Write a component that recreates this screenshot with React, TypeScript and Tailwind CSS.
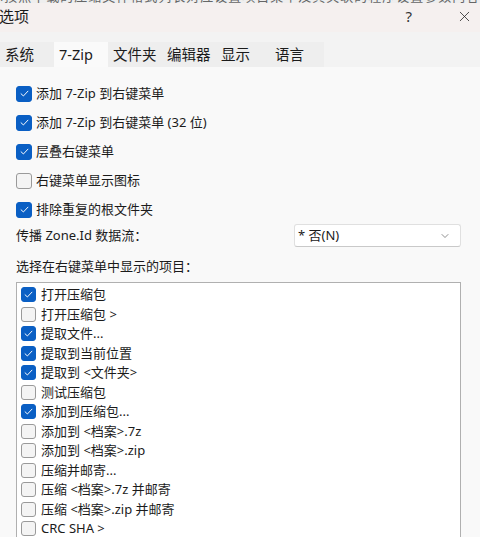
import { X, ChevronDown } from 'lucide-react'

const FONT = "font-['Segoe_UI','Noto_Sans','Noto_Sans_CJK_SC',sans-serif]"

const OPTIONS = [
  { label: '添加 7-Zip 到右键菜单', on: true },
  { label: '添加 7-Zip 到右键菜单 (32 位)', on: true },
  { label: '层叠右键菜单', on: true },
  { label: '右键菜单显示图标', on: false },
  { label: '排除重复的根文件夹', on: true },
]

const ITEMS = [
  { label: '打开压缩包', on: true },
  { label: '打开压缩包 >', on: false },
  { label: '提取文件...', on: true },
  { label: '提取到当前位置', on: true },
  { label: '提取到 <文件夹>', on: true },
  { label: '测试压缩包', on: false },
  { label: '添加到压缩包...', on: true },
  { label: '添加到 <档案>.7z', on: false },
  { label: '添加到 <档案>.zip', on: false },
  { label: '压缩并邮寄...', on: false },
  { label: '压缩 <档案>.7z 并邮寄', on: false },
  { label: '压缩 <档案>.zip 并邮寄', on: false },
  { label: 'CRC SHA >', on: false },
]

const TABS = ['系统', '7-Zip', '文件夹', '编辑器', '显示', '语言']

function Check({ on, size }: { on: boolean; size: string }) {
  return (
    <span
      className={`${size} shrink-0 rounded-[3px] flex items-center justify-center ${
        on ? 'bg-[#0a5fc4] border border-[#0a5fc4]' : 'bg-[#f4f4f4] border border-[#9a9a9a]'
      }`}
    >
      {on && (
        <svg viewBox="0 0 16 16" className="w-[11px] h-[11px]" fill="none">
          <path d="M3 8.4 L6.4 11.6 L13 4.6" stroke="#fff" strokeWidth="1.4" strokeLinecap="round" strokeLinejoin="round" />
        </svg>
      )}
    </span>
  )
}

export default function App() {
  return (
    <div className={`w-[480px] h-[537px] overflow-hidden bg-[#f9f9f9] text-[#1b1b1b] ${FONT}`}>
      {/* sliver of the window behind */}
      <div className="h-[3px] overflow-hidden bg-[#eeeeee]">
        <p className="-mt-[13px] whitespace-nowrap text-[13px] text-[#666] tracking-[1px]">
          l按照下载的压缩文件格式列表对应设置项目菜单及其关联的程序设置参数内容说明文档
        </p>
      </div>

      {/* Title bar */}
      <div className="h-[29px] flex items-center bg-[#f5f0ef] pb-[2px]">
        <span className="-ml-[1px] text-[15px] leading-none">选项</span>
        <span className="ml-auto mr-[44px] text-[15px] leading-none text-[#333]">?</span>
        <X size={17} strokeWidth={1.1} className="mr-[7px] text-[#222]" />
      </div>

      {/* Tabs */}
      <div className="h-[35px] bg-[#f3f3f3] flex items-end">
        {TABS.map((t) => (
          <div
            key={t}
            className={`w-[54px] h-[25px] px-[5px] flex items-center text-[14.5px] leading-none ${
              t === '7-Zip' ? 'bg-[#fafafa]' : 'bg-[#eeeeee]'
            }`}
          >
            {t}
          </div>
        ))}
      </div>

      {/* Content */}
      <div className="pl-[16px] pr-[19px] pt-[12px] text-[13px]">
        {OPTIONS.map((o) => (
          <div key={o.label} className="h-[29px] flex items-center gap-[4px]">
            <Check on={o.on} size="w-[16px] h-[16px]" />
            <span className="leading-none">{o.label}</span>
          </div>
        ))}

        <div className="h-[23px] flex items-center">
          <span className="leading-none">传播 Zone.Id 数据流：</span>
          <div className="ml-auto w-[167px] h-[23px] bg-white border border-[#e0e0e0] border-b-[#c9c9c9] rounded-[3px] flex items-center pl-[3px] pr-[9px]">
            <span className="leading-none">* 否(N)</span>
            <ChevronDown size={12} strokeWidth={1.2} className="ml-auto text-[#444]" />
          </div>
        </div>

        <div className="pt-[11px] leading-[17px]">选择在右键菜单中显示的项目：</div>

        <div className="mt-[7px] h-[300px] bg-white border border-[#b0b0b0] pl-[4px] pt-[2px]">
          {ITEMS.map((i) => (
            <div key={i.label} className="h-[19.5px] flex items-center gap-[5px]">
              <Check on={i.on} size="w-[15px] h-[15px]" />
              <span className="leading-none">{i.label}</span>
            </div>
          ))}
        </div>
      </div>
    </div>
  )
}
